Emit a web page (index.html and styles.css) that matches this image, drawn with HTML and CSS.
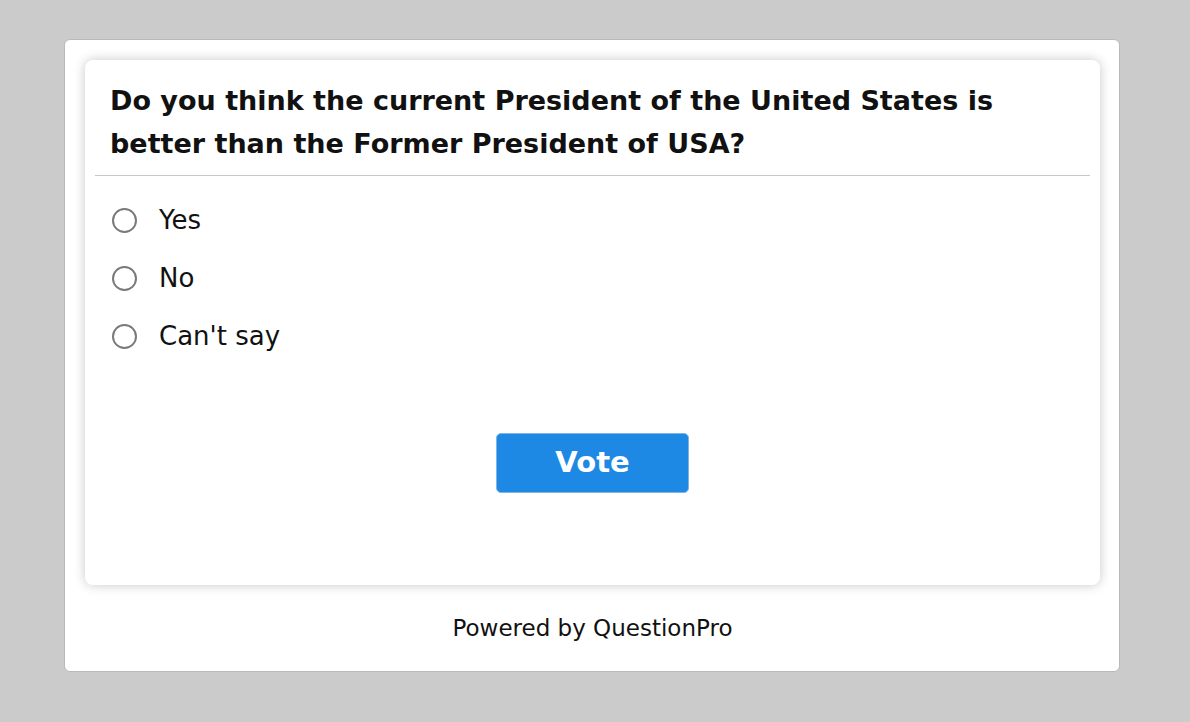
FILE: index.html
```html
<!DOCTYPE html>
<html>
<head>
<meta charset="utf-8">
<link rel="stylesheet" href="styles.css">
</head>
<body>
<div class="panel">
  <div class="card">
    <div class="question">Do you think the current President of the United States is better than the Former President of USA?</div>
    <div class="options">
      <label class="option"><span class="radio"></span><span class="label">Yes</span></label>
      <label class="option"><span class="radio"></span><span class="label">No</span></label>
      <label class="option"><span class="radio"></span><span class="label">Can't say</span></label>
    </div>
    <div class="actions"><button class="vote">Vote</button></div>
  </div>
  <div class="footer">Powered by QuestionPro</div>
</div>
</body>
</html>
```
FILE: styles.css
```css
html, body {
  margin: 0;
  padding: 0;
  background: #cbcbcb;
  font-family: "DejaVu Sans", Verdana, sans-serif;
  color: #111;
}
body {
  padding: 39px 0 0 64px;
}
.panel {
  background: #fff;
  border: 1px solid #b9b9b9;
  border-radius: 6px;
  padding: 20px 19px 0 20px;
  box-sizing: border-box;
  height: 633px;
  width: 1056px;
  display: flex;
  flex-direction: column;
}
.card {
  height: 525px;
  background: #fff;
  border-radius: 8px;
  box-shadow: 0 0 12px rgba(0,0,0,0.22);
  padding: 0 10px;
  box-sizing: border-box;
  flex: none;
}
.question {
  font-weight: bold;
  font-size: 27px;
  line-height: 43px;
  padding: 19px 15px 10px;
  border-bottom: 1px solid #c8c8c8;
}
.options {
  padding: 15px 0 0 17px;
  display: flex;
  flex-direction: column;
}
.option {
  display: flex;
  align-items: center;
  height: 58px;
}
.radio {
  width: 21px;
  height: 21px;
  border: 2px solid #7a7a7a;
  border-radius: 50%;
  box-sizing: content-box;
  flex: none;
}
.label {
  font-size: 26px;
  margin-left: 22px;
  color: #111;
}
.actions {
  display: flex;
  justify-content: center;
  margin-top: 68px;
}
.vote {
  width: 193px;
  height: 60px;
  background: #1e88e5;
  border: 1px solid #7fb3e4;
  border-radius: 5px;
  color: #fff;
  font-family: "DejaVu Sans", Verdana, sans-serif;
  font-weight: bold;
  font-size: 29px;
  padding: 0 0 2px;
}
.footer {
  flex: 1;
  display: flex;
  align-items: center;
  justify-content: center;
  font-size: 23px;
  color: #111;
}
```
